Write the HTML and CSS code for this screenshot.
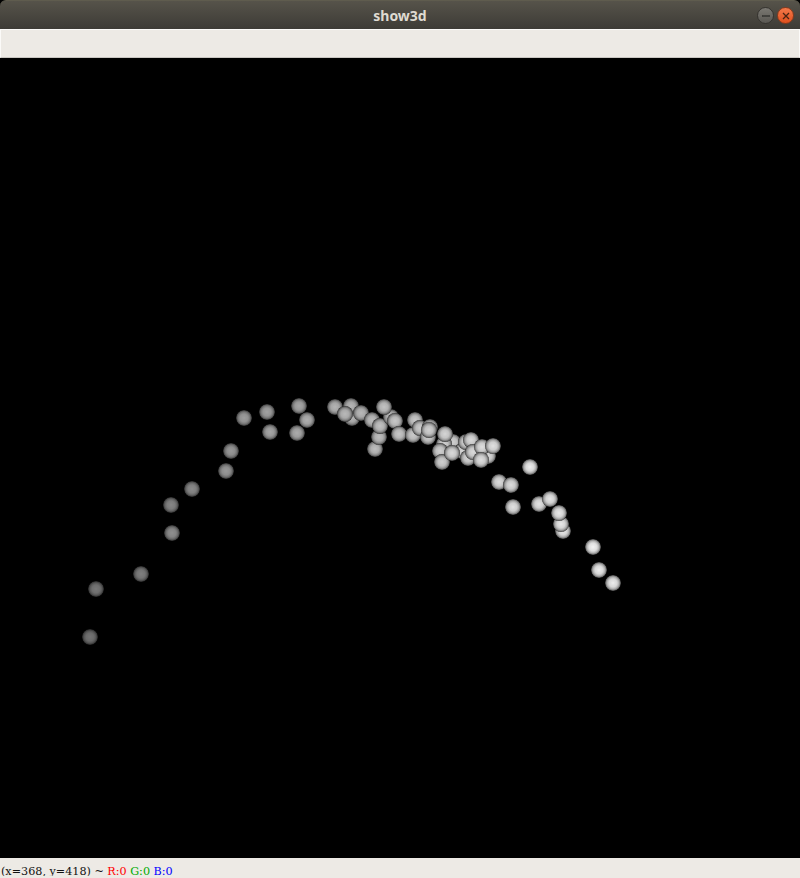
FILE: index.html
```html
<!DOCTYPE html>
<html lang="en">
<head>
    <meta charset="UTF-8">
    <title>show3d</title>
    <link rel="stylesheet" href="styles.css">
</head>
<body>
    <div class="window">
        <header class="titlebar">
            <span class="title">show3d</span>
            <div class="buttons">
                <button class="wm-btn wm-min" aria-label="Minimize">
                    <svg width="10" height="10" viewBox="0 0 10 10"><path d="M1 5h8" stroke="#2e2d2a" stroke-width="1.3"/></svg>
                </button>
                <button class="wm-btn wm-close" aria-label="Close">
                    <svg width="10" height="10" viewBox="0 0 10 10"><path d="M2 2l6 6M8 2l-6 6" stroke="#4a2413" stroke-width="1.3"/></svg>
                </button>
            </div>
        </header>

        <div class="toolbar"></div>

        <!-- viewBox starts at y=58 so the points read as window coordinates -->
        <svg class="view" viewBox="0 58 800 800">
            <defs>
                <radialGradient id="ball">
                    <stop offset="0" stop-color="#e8e8e8"/>
                    <stop offset="0.5" stop-color="#d4d4d4"/>
                    <stop offset="0.75" stop-color="#a8a8a8"/>
                    <stop offset="0.92" stop-color="#6a6a6a"/>
                    <stop offset="1" stop-color="#222222"/>
                </radialGradient>
            </defs>
            <circle cx="90" cy="637" r="8" fill="url(#ball)" style="filter:brightness(.5)"/>
            <circle cx="96" cy="589" r="8" fill="url(#ball)" style="filter:brightness(.52)"/>
            <circle cx="141" cy="574" r="8" fill="url(#ball)" style="filter:brightness(.55)"/>
            <circle cx="172" cy="533" r="8" fill="url(#ball)" style="filter:brightness(.62)"/>
            <circle cx="171" cy="505" r="8" fill="url(#ball)" style="filter:brightness(.58)"/>
            <circle cx="192" cy="489" r="8" fill="url(#ball)" style="filter:brightness(.6)"/>
            <circle cx="226" cy="471" r="8" fill="url(#ball)" style="filter:brightness(.66)"/>
            <circle cx="231" cy="451" r="8" fill="url(#ball)" style="filter:brightness(.66)"/>
            <circle cx="244" cy="418" r="8" fill="url(#ball)" style="filter:brightness(.68)"/>
            <circle cx="267" cy="412" r="8" fill="url(#ball)" style="filter:brightness(.7)"/>
            <circle cx="270" cy="432" r="8" fill="url(#ball)" style="filter:brightness(.72)"/>
            <circle cx="297" cy="433" r="8" fill="url(#ball)" style="filter:brightness(.74)"/>
            <circle cx="299" cy="406" r="8" fill="url(#ball)" style="filter:brightness(.72)"/>
            <circle cx="307" cy="420" r="8" fill="url(#ball)" style="filter:brightness(.76)"/>
            <circle cx="335" cy="407" r="8" fill="url(#ball)" style="filter:brightness(.78)"/>
            <circle cx="352" cy="418" r="8" fill="url(#ball)" style="filter:brightness(.78)"/>
            <circle cx="351" cy="406" r="8" fill="url(#ball)" style="filter:brightness(.78)"/>
            <circle cx="345" cy="414" r="8" fill="url(#ball)" style="filter:brightness(.8)"/>
            <circle cx="361" cy="413" r="8" fill="url(#ball)" style="filter:brightness(.8)"/>
            <circle cx="372" cy="420" r="8" fill="url(#ball)" style="filter:brightness(.82)"/>
            <circle cx="375" cy="449" r="8" fill="url(#ball)" style="filter:brightness(.82)"/>
            <circle cx="379" cy="437" r="8" fill="url(#ball)" style="filter:brightness(.82)"/>
            <circle cx="380" cy="426" r="8" fill="url(#ball)" style="filter:brightness(.84)"/>
            <circle cx="391" cy="417" r="8" fill="url(#ball)" style="filter:brightness(.82)"/>
            <circle cx="384" cy="407" r="8" fill="url(#ball)" style="filter:brightness(.84)"/>
            <circle cx="395" cy="421" r="8" fill="url(#ball)" style="filter:brightness(.86)"/>
            <circle cx="399" cy="434" r="8" fill="url(#ball)" style="filter:brightness(.86)"/>
            <circle cx="413" cy="435" r="8" fill="url(#ball)" style="filter:brightness(.87)"/>
            <circle cx="415" cy="420" r="8" fill="url(#ball)" style="filter:brightness(.86)"/>
            <circle cx="420" cy="428" r="8" fill="url(#ball)" style="filter:brightness(.88)"/>
            <circle cx="428" cy="437" r="8" fill="url(#ball)" style="filter:brightness(.88)"/>
            <circle cx="430" cy="427" r="8" fill="url(#ball)" style="filter:brightness(.88)"/>
            <circle cx="429" cy="430" r="8" fill="url(#ball)" style="filter:brightness(.9)"/>
            <circle cx="453" cy="442" r="8" fill="url(#ball)" style="filter:brightness(.9)"/>
            <circle cx="444" cy="444" r="8" fill="url(#ball)" style="filter:brightness(.9)"/>
            <circle cx="445" cy="434" r="8" fill="url(#ball)" style="filter:brightness(.92)"/>
            <circle cx="440" cy="451" r="8" fill="url(#ball)" style="filter:brightness(.9)"/>
            <circle cx="442" cy="462" r="8" fill="url(#ball)" style="filter:brightness(.9)"/>
            <circle cx="462" cy="451" r="8" fill="url(#ball)" style="filter:brightness(.92)"/>
            <circle cx="452" cy="453" r="8" fill="url(#ball)" style="filter:brightness(.94)"/>
            <circle cx="466" cy="442" r="8" fill="url(#ball)" style="filter:brightness(.92)"/>
            <circle cx="471" cy="440" r="8" fill="url(#ball)" style="filter:brightness(.94)"/>
            <circle cx="468" cy="458" r="8" fill="url(#ball)" style="filter:brightness(.92)"/>
            <circle cx="473" cy="452" r="8" fill="url(#ball)" style="filter:brightness(.94)"/>
            <circle cx="488" cy="456" r="8" fill="url(#ball)" style="filter:brightness(.94)"/>
            <circle cx="482" cy="447" r="8" fill="url(#ball)" style="filter:brightness(.96)"/>
            <circle cx="481" cy="460" r="8" fill="url(#ball)" style="filter:brightness(.96)"/>
            <circle cx="493" cy="446" r="8" fill="url(#ball)" style="filter:brightness(.97)"/>
            <circle cx="499" cy="482" r="8" fill="url(#ball)" style="filter:brightness(.95)"/>
            <circle cx="511" cy="485" r="8" fill="url(#ball)" style="filter:brightness(.95)"/>
            <circle cx="513" cy="507" r="8" fill="url(#ball)" style="filter:brightness(.97)"/>
            <circle cx="530" cy="467" r="8" fill="url(#ball)" style="filter:brightness(1.02)"/>
            <circle cx="539" cy="504" r="8" fill="url(#ball)" style="filter:brightness(.98)"/>
            <circle cx="550" cy="499" r="8" fill="url(#ball)" style="filter:brightness(.99)"/>
            <circle cx="563" cy="531" r="8" fill="url(#ball)" style="filter:brightness(1)"/>
            <circle cx="561" cy="524" r="8" fill="url(#ball)" style="filter:brightness(1)"/>
            <circle cx="559" cy="513" r="8" fill="url(#ball)" style="filter:brightness(1)"/>
            <circle cx="593" cy="547" r="8" fill="url(#ball)" style="filter:brightness(1.05)"/>
            <circle cx="599" cy="570" r="8" fill="url(#ball)" style="filter:brightness(1.02)"/>
            <circle cx="613" cy="583" r="8" fill="url(#ball)" style="filter:brightness(1.02)"/>
        </svg>

        <footer class="status">
            <span class="coords">(x=368, y=418) ~</span>
            <span class="red">R:0</span>
            <span class="green">G:0</span>
            <span class="blue">B:0</span>
        </footer>
    </div>
</body>
</html>
```

FILE: styles.css
```css
html, body
{
    margin: 0;
    background-color: #000;
}

.window
{
    display: flex;
    flex-direction: column;
    width: 800px;
    height: 878px;
    overflow: hidden;
}

.titlebar
{
    display: flex;
    align-items: center;
    justify-content: center;
    position: relative;
    flex: 0 0 29px;
    border-top: 1px solid #5f5c4e;
    box-sizing: border-box;
    border-radius: 6px 6px 0 0;
    background: linear-gradient(#56534a, #3d3b36);
}

.title
{
    color: #dfdbd2;
    font-family: "Noto Sans", sans-serif;
    font-size: 14px;
    font-weight: 700;
}

.buttons
{
    position: absolute;
    top: 6px;
    right: 6px;
    display: flex;
    gap: 3px;
}

.wm-btn
{
    display: flex;
    align-items: center;
    justify-content: center;
    width: 17px;
    height: 17px;
    padding: 0;
    border: 1px solid #35332f;
    border-radius: 50%;
    background: linear-gradient(#7a7872, #5a5853);
}

.wm-close
{
    border-color: #8a3a1c;
    background: linear-gradient(#f4794a, #e0501e);
}

.toolbar
{
    flex: 0 0 29px;
    box-sizing: border-box;
    background-color: #edeae5;
    border-top: 1px solid #fbfaf8;
    border-left: 1px solid #fbfaf8;
    border-right: 1px solid #fbfaf8;
    border-bottom: 1px solid #c9c6c1;
}

.view
{
    display: block;
    flex: 0 0 800px;
    width: 800px;
    height: 800px;
    background-color: #000;
}

/* the text sits low and its descenders get cut, same as the real window */
.status
{
    display: flex;
    gap: 3.5px;
    flex: 0 0 20px;
    padding: 0 0 0 1px;
    box-sizing: border-box;
    background-color: #edeae5;
    color: #111;
    font-family: "DejaVu Serif", serif;
    font-size: 11.2px;
    line-height: 27px;
    white-space: pre;
}

.status span
{
    height: 18px;
    overflow: hidden;
}

.red
{
    color: #f00;
}

.green
{
    color: #0a0;
}

.blue
{
    color: #00f;
}
```
